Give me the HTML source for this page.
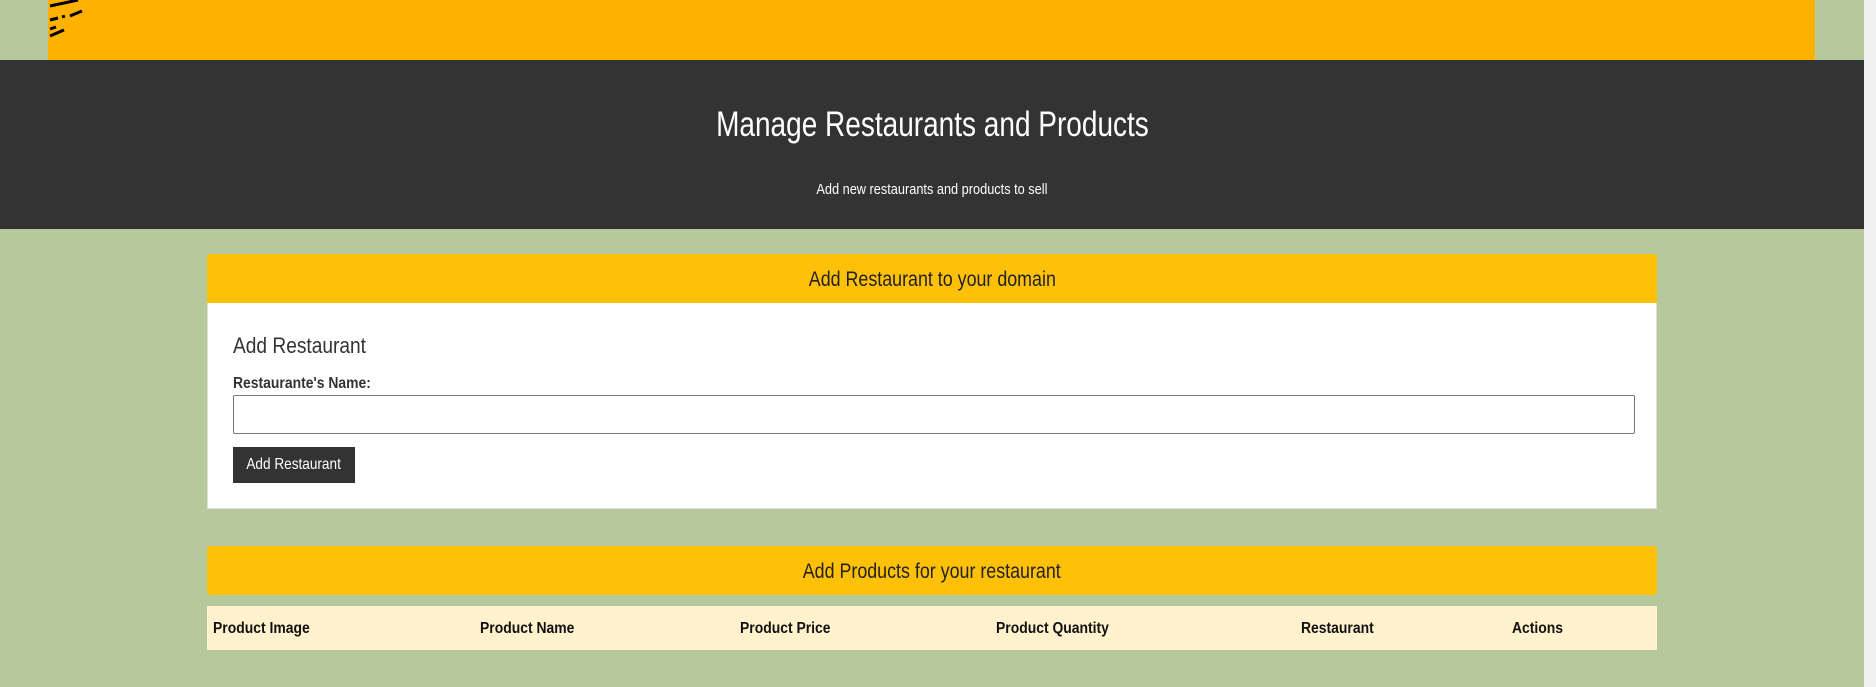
<!DOCTYPE html>
<html><head><style>
body{margin:0;width:1876px;height:687px;background:#b5c99c;font-family:"Liberation Sans",sans-serif;position:relative;overflow:hidden}
.s{display:inline-block;transform:scaleX(.85);transform-origin:center}
.l{display:inline-block;transform:scaleX(.87);transform-origin:left}
.banner{position:absolute;left:48px;top:0;width:1767px;height:60px;background:#ffb100}
.dark{position:absolute;left:0;top:60px;width:1864px;height:169px;background:#333;color:#fff;text-align:center}
.dark h1{margin:0;position:absolute;top:45px;width:100%;font-weight:normal;font-size:35px}
.dark h1 .s{transform:scaleX(.8)}
.dark p{margin:0;position:absolute;top:121px;width:100%;font-size:15px}
.sb{position:absolute;right:0;top:0;width:12px;height:687px;background:#f0f0f0}
.card{position:absolute;left:207px;width:1450px}
.hd{background:#ffc107;height:49px;line-height:51px;text-align:center;font-size:21px;color:#222;border-radius:3px 3px 0 0}
.body{background:#fff;height:206px;position:relative;border:1px solid #ddd;border-top:none;box-sizing:border-box}
.body h3{position:absolute;left:25px;top:30px;margin:0;font-weight:normal;font-size:22px;color:#333}
.lbl{position:absolute;left:25px;top:72px;font-size:16px;font-weight:bold;color:#333}
.inp{position:absolute;left:25px;top:92px;width:1402px;height:39px;border:1px solid #777;border-radius:2px;box-sizing:border-box}
.btn{position:absolute;left:25px;top:144px;width:122px;height:36px;background:#333;color:#fff;font-size:16px;line-height:36px;text-align:center}
.row{position:absolute;left:207px;top:606px;width:1450px;height:44px;background:#fff2cc;font-weight:bold;font-size:16px;color:#111}
.row span{position:absolute;top:14px;transform:scaleX(.87);transform-origin:left}
</style></head><body>
<div class="banner"><svg width="80" height="45" style="position:absolute;left:0;top:0"><path d="M2 6l28-6M2 20l8-2M14 17l3-1M22 16l12-5M2 36l14-6M2 29l6-2" stroke="#000" stroke-width="3"/></svg></div>
<div class="dark"><h1><span class="s">Manage Restaurants and Products</span></h1><p><span class="s">Add new restaurants and products to sell</span></p></div>
<div class="sb"></div>
<div class="card" style="top:254px"><div class="hd"><span class="s">Add Restaurant to your domain</span></div>
<div class="body"><h3><span class="l">Add Restaurant</span></h3><div class="lbl"><span class="l">Restaurante's Name:</span></div><div class="inp"></div><div class="btn"><span class="s">Add Restaurant</span></div></div></div>
<div class="card" style="top:546px"><div class="hd" style="border-radius:3px"><span class="s">Add Products for your restaurant</span></div></div>
<div class="row"><span style="left:6px">Product Image</span><span style="left:273px">Product Name</span><span style="left:533px">Product Price</span><span style="left:789px">Product Quantity</span><span style="left:1094px">Restaurant</span><span style="left:1305px">Actions</span></div>
</body></html>
